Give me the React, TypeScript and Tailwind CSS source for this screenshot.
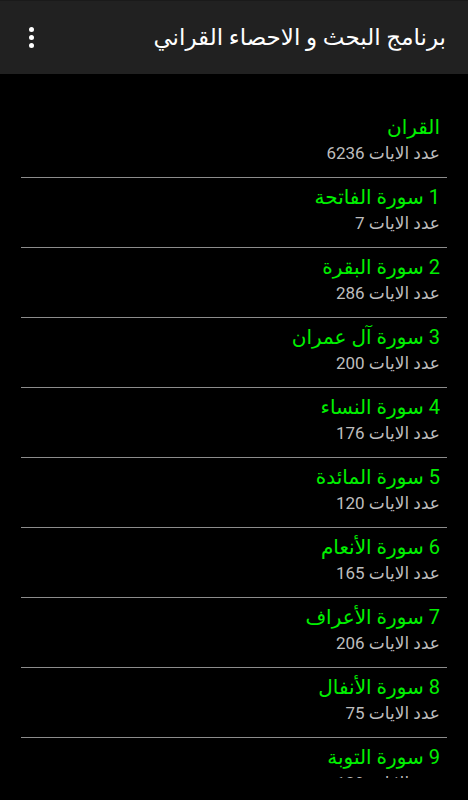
const ITEMS = [
  { title: 'القران', count: 6236 },
  { title: '1 سورة الفاتحة', count: 7 },
  { title: '2 سورة البقرة', count: 286 },
  { title: '3 سورة آل عمران', count: 200 },
  { title: '4 سورة النساء', count: 176 },
  { title: '5 سورة المائدة', count: 120 },
  { title: '6 سورة الأنعام', count: 165 },
  { title: '7 سورة الأعراف', count: 206 },
  { title: '8 سورة الأنفال', count: 75 },
  { title: '9 سورة التوبة', count: 129 },
]

const App = () => {
  return (
    <div
      className="w-[468px] h-[800px] bg-black flex flex-col overflow-hidden"
      style={{ fontFamily: 'Roboto, "DejaVu Sans", sans-serif' }}
    >
      <header className="h-[74px] shrink-0 bg-[#212121] border-t border-[#1a1a1a] flex items-center justify-between pl-[29px] pr-[22px]">
        <div className="flex flex-col gap-[3px]">
          <span className="block w-[5px] h-[5px] rounded-full bg-white" />
          <span className="block w-[5px] h-[5px] rounded-full bg-white" />
          <span className="block w-[5px] h-[5px] rounded-full bg-white" />
        </div>
        <h1 dir="rtl" className="text-white text-[23px] leading-7">
          برنامج البحث و الاحصاء القراني
        </h1>
      </header>

      <div className="h-[704px] shrink-0 overflow-hidden pt-[34px] px-[21px]">
        {ITEMS.map((item, i) => (
          <div
            key={i}
            dir="rtl"
            className={`pr-[7px] pt-[5px] pb-[13px] ${i < ITEMS.length - 1 ? 'border-b border-[#8c8c8c]' : ''}`}
          >
            <div className="text-[#00f000] text-[20px] leading-7">{item.title}</div>
            <div className="text-[#bdbdbd] text-[17px] leading-[22px] mt-px">عدد الايات {item.count}</div>
          </div>
        ))}
      </div>
    </div>
  )
}

export default App
